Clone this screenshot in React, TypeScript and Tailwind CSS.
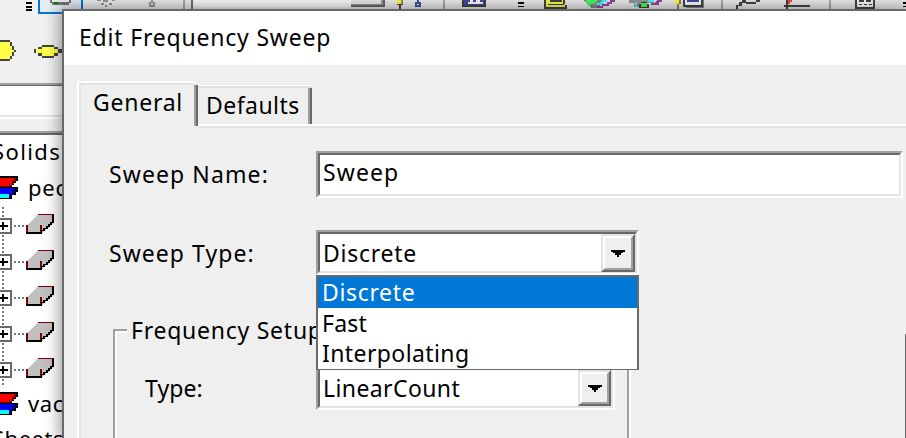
import type { ReactNode } from "react";

const TEXT = "block whitespace-pre font-['Noto_Sans','Open_Sans',sans-serif] leading-[30px]";

function Text({ children, className = "", size = "text-[23px] translate-y-px" }: { children: ReactNode; className?: string; size?: string }) {
  return <span className={`${TEXT} ${size} ${className}`}>{children}</span>;
}

function ToolbarIcons() {
  return (
    <svg width="906" height="10" shapeRendering="crispEdges" className="block shrink-0">
      <path d="M26 2h6v2h-6zM26 6h6v2h-6zM26 9h6v1h-6z" fill="#000" />
      <rect x="38" y="0" width="45" height="10" fill="#e5eef7" />
      <path d="M38 0h2v10h-2zM81 0h2v10h-2z" fill="#0078d7" />
      <path d="M50 0h21v3h-2v2h-17v-2h-2z" fill="#777" />
      <path d="M52 0h17v2h-17z" fill="#eee" />
      <path d="M54 2h4v2h-4z" fill="#008000" />
      <path d="M97 0h4v1h-4zM103 0h5v2h-5zM101 3h3v2h-3zM109 3h3v2h-3zM112 0h3v1h-3zM105 5h2v2h-2zM151 0h2v2h2v5h-6v-5h2z" fill="#999" />
      <path d="M151 3h2v2h-2z" fill="#eee" />
      <path d="M183 0h2v9h-2z" fill="#aaa" />
      <path d="M191 0h2v9h-2z" fill="#777" />
      <path d="M194 0h157v7h-157z" fill="#fff" />
      <path d="M351 0h34v7h-34z" fill="#696969" />
      <path d="M351 0h32v5h-32z" fill="#a0a0a0" />
      <path d="M351 0h30v4h-30z" fill="#ececec" />
      <path d="M397 0h6v4h-6z" fill="#ffff48" />
      <path d="M401 0h2v4h-2z" fill="#999933" />
      <path d="M397 4h6v1h-2v4h-2v-4h-2z" fill="#444" />
      <path d="M417 0h2v2h2v5h-6v-5h2z" fill="#4550a5" />
      <path d="M417 4h2v1h-2z" fill="#fff" />
      <path d="M443 0h2v9h-2zM721 0h2v9h-2zM829 0h2v9h-2z" fill="#aaa" />
      <path d="M462 0h24v7h-24z" fill="#444" />
      <path d="M464 0h20v5h-20z" fill="#4848a4" />
      <path d="M470 0h3v2h3v-2h4v2h3v2h-15v-2h2z" fill="#fff" />
      <path d="M518 2h6v2h-6zM518 6h6v1h-6zM518 9h6v1h-6z" fill="#000" />
      <path d="M544 0h21v5h2v4h-23z" fill="#444" />
      <path d="M546 0h17v4h2v3h-19z" fill="#ffff48" />
      <path d="M550 0h12v2h-12zM548 4h16v1h-16z" fill="#444" />
      <path d="M583 0h24l-10 8h-6z" fill="#888" />
      <path d="M586 0h11v2h-2v2h-4v2h-3v-3h-2z" fill="#48ff60" />
      <path d="M602 0h5v2h-3v3h-8v-2h4z" fill="#48f5ff" />
      <path d="M610 0h5v2h-3v2h-3v2h-6v2h-6v-2h5v-2h5v-2h3z" fill="#9b459d" />
      <path d="M629 0h25v3h-10v4h-10v-4h-5z" fill="#999" />
      <path d="M641 2h6v2h2v4h-10v-4h2z" fill="#444" />
      <path d="M641 3h6v4h-6z" fill="#48ff60" />
      <path d="M635 2h2v5h-2zM648 0h6v2h-6z" fill="#48f5ff" />
      <path d="M657 0h5v2h-3v3h-8v-2h4z" fill="#9b459d" />
      <path d="M675 0h6v4h-6z" fill="#ffff48" />
      <path d="M679 0h2v4h-2zM677 4h2v5h-2z" fill="#8c8c40" />
      <path d="M686 0h18v8h-18z" fill="#888" />
      <path d="M683 0h20v7h-20z" fill="#444" />
      <path d="M685 0h16v5h-16z" fill="#fff" />
      <path d="M687 0h12v2h-12z" fill="#4848a4" />
      <path d="M742 0h18v2h-4v2h-10v-1h-4v3h-4v3h-2v-4h3v-3h3z" fill="#444" />
      <path d="M746 0h10v2h-10z" fill="#eee" />
      <path d="M786 0h2v5h22v2h-22v2h-2v-2h-2v-2h2z" fill="#444" />
      <path d="M788 0h4v2h-2v2h-2z" fill="#ff4848" />
      <path d="M855 0h20v9h-20z" fill="#444" />
      <path d="M857 0h16v7h-16z" fill="#fff" />
      <path d="M859 0h5v2h-5zM866 0h5v2h-5zM859 4h3v1h-3zM864 4h3v1h-3zM869 4h3v1h-3z" fill="#444" />
      <path d="M903 2h3v2h-3zM903 6h3v1h-3zM903 9h3v1h-3z" fill="#000" />
    </svg>
  );
}

function ShapeTools() {
  return (
    <svg width="62" height="73" shapeRendering="crispEdges" className="block shrink-0">
      <path d="M26 0h6v1h-6z" fill="#000" />
      <path d="M38 0h24v4h-24z" fill="#0078d7" />
      <path d="M40 0h22v2h-22z" fill="#e5eef7" />
      <path d="M0 30h10v2h2v4h2v4h2v2h-2v4h-2v3h-2v2h-10z" fill="#444" />
      <path d="M0 32h10v4h2v4h2v2h-2v4h-2v3h-10z" fill="#ffff48" />
      <path d="M42 35h12v2h4v2h4v4h-4v3h-4v2h-12v-2h-4v-3h-4v-4h4v-2h4z" fill="#444" />
      <path d="M42 37h12v2h4v4h-4v3h-12v-3h-6v-4h6z" fill="#ffff48" />
    </svg>
  );
}

function Stack() {
  return (
    <svg width="18" height="24" shapeRendering="crispEdges" className="block shrink-0">
      <path d="M0 0h18v5h-2v2h-2v2h-2v2h6v5h-2v3h-4v4h-12z" fill="#000" />
      <path d="M0 2h16v2h-2v2h-2v4h-12z" fill="#f00" />
      <path d="M16 2v4h-2v2h-3v3h-11v-1h9v-2h3v-4h2v-2z" fill="#800000" />
      <path d="M0 12h14v2h-2v3h-2v4h-10z" fill="#00f" />
      <path d="M12 14h4v2h-2v3h-4v-2h2z" fill="#000080" />
      <path d="M0 18h9v4h-9z" fill="#0ff" />
    </svg>
  );
}

function SolidNode() {
  return (
    <div className="h-9 shrink-0">
      <svg width="62" height="36" shapeRendering="crispEdges" className="block">
        <path d="M3 0v36" stroke="#777" strokeWidth="2" strokeDasharray="2 2" />
        <path d="M14 19h12" stroke="#777" strokeWidth="2" strokeDasharray="2 2" />
        <path d="M0 11h12v16h-12z" fill="#696969" />
        <path d="M0 13h10v12h-10z" fill="#fff" />
        <path d="M0 18h8v2h-8zM2 15h2v8h-2z" fill="#000" />
        <path d="M26 19l12-12h16v9l-12 10h-16z" fill="#c0c0c0" />
        <path d="M38 7h16v1h-16zM26 18h2v7h-2zM40 18h2v7h-2z" fill="#800000" />
        <path d="M52 8h2v8h-2v2h-2v2h-2v2h-3v2h-3v3h-16v-2h15v-2h2v-2h3v-2h2v-2h2v-2h2z" fill="#000" />
      </svg>
    </div>
  );
}

function ArrowButton({ className }: { className: string }) {
  return (
    <div className={`border-2 border-t-[#e3e3e3] border-l-[#e3e3e3] border-r-[#696969] border-b-[#696969] ${className}`}>
      <div className="flex h-full items-center justify-center border-2 border-t-white border-l-white border-r-[#a0a0a0] border-b-[#a0a0a0] bg-[#efefef]">
        <svg width="14" height="7" shapeRendering="crispEdges">
          <path d="M0 0h14v2h-2v1h-2v2h-2v2h-2v-2h-2v-2h-2v-1h-2z" fill="#000" />
        </svg>
      </div>
    </div>
  );
}

function Sunken({ children, className }: { children: ReactNode; className: string }) {
  return (
    <div className={`border-2 border-t-[#a0a0a0] border-l-[#a0a0a0] border-r-white border-b-white ${className}`}>
      <div className="flex h-full justify-between border-2 border-t-[#696969] border-l-[#696969] border-r-[#e3e3e3] border-b-[#e3e3e3] bg-white pl-[3px]">
        {children}
      </div>
    </div>
  );
}

function MainWindow() {
  return (
    <div className="flex h-[438px] flex-col overflow-hidden bg-[#f0f0f0]">
      <ToolbarIcons />
      <ShapeTools />
      <div className="flex w-[62px] flex-1 flex-col overflow-hidden">
        <div className="h-[36px] shrink-0 border-t-2 border-b-2 border-t-[#a0a0a0] border-b-white bg-white">
          <div className="h-px bg-[#696969]" />
          <div className="mt-[29px] h-0.5 bg-[#e3e3e3]" />
        </div>
        <div className="mt-3 flex h-[307px] shrink-0 flex-col overflow-hidden border-t-2 border-[#a0a0a0]">
          <div className="flex flex-1 flex-col border-t-2 border-[#696969] bg-white pt-px">
            <Text size="text-[22px]" className="-ml-[8px] tracking-[1.4px]">Solids</Text>
            <div className="mt-[5px] flex h-[36px] shrink-0">
              <div className="pt-[5px]"><Stack /></div>
              <Text size="text-[22px]" className="mt-px ml-[10px] tracking-[0.8px]">pec</Text>
            </div>
            <SolidNode />
            <SolidNode />
            <SolidNode />
            <SolidNode />
            <SolidNode />
            <div className="flex h-[36px] shrink-0">
              <div className="pt-[5px]"><Stack /></div>
              <Text size="text-[22px]" className="mt-px ml-[10px] tracking-[0.6px]">vac</Text>
            </div>
            <Text size="text-[22px]" className="-ml-[8px] tracking-[0.5px]">Sheets</Text>
          </div>
        </div>
      </div>
    </div>
  );
}

function Tabs() {
  return (
    <div className="flex h-[47px] shrink-0">
      <div className="w-[117px] border-t-2 border-l-2 border-white">
        <div className="flex h-[45px] border-t-2 border-l-2 border-[#e3e3e3]">
          <div className="h-[41px] w-[117px] shrink-0 border-r-2 border-[#696969]">
            <div className="h-full border-r-2 border-[#a0a0a0] pt-[1px] pl-[12px]">
              <Text className="tracking-[0.75px]">General</Text>
            </div>
          </div>
        </div>
      </div>
      <div className="ml-[4px] flex flex-1 flex-col">
        <div className="mt-[4px] h-[39px] w-[114px] border-t border-white">
          <div className="h-[38px] border-t-2 border-[#e3e3e3]">
            <div className="h-9 border-r-2 border-[#696969]">
              <div className="h-full border-r-2 border-[#a0a0a0] pt-px pl-[8px]">
                <Text className="tracking-[0.45px]">Defaults</Text>
              </div>
            </div>
          </div>
        </div>
        <div className="h-0.5 shrink-0 bg-white" />
        <div className="h-0.5 shrink-0 bg-[#e3e3e3]" />
      </div>
    </div>
  );
}

function FrequencySetup() {
  return (
    <div className="ml-[32px] flex h-[130px] w-[518px] shrink-0">
      <div className="mt-[15px] w-[14px] shrink-0 border-t-2 border-l-2 border-[#a0a0a0]">
        <div className="h-full border-t-2 border-l-2 border-white" />
      </div>
      <div className="flex flex-1 flex-col">
        <Text className="ml-[4px] w-[190px] tracking-[0.75px]">Frequency Setup</Text>
        <div className="mt-[22px] flex">
          <Text className="ml-[18px] w-[171px] pt-[6px] tracking-[0.1px]">Type:</Text>
          <Sunken className="h-[44px] w-[299px]">
            <Text className="pt-[2px] tracking-[0.4px]">LinearCount</Text>
            <ArrowButton className="h-[36px] w-[33px]" />
          </Sunken>
        </div>
      </div>
      <div className="mt-[15px] w-[4px] border-r-2 border-white">
        <div className="h-full border-r-2 border-[#a0a0a0]" />
      </div>
    </div>
  );
}

const OPTIONS = [
  { name: "Discrete", style: "h-[31px] bg-[#0078d7] text-white tracking-[0.65px]" },
  { name: "Fast", style: "h-[30px] tracking-[0.2px]" },
  { name: "Interpolating", style: "h-[31px] tracking-[0.4px]" },
];

function TypeList() {
  return (
    <div className="absolute top-[45px] left-0 z-10 h-[95px] w-[323px] border-2 border-b border-[#696969] bg-white">
      {OPTIONS.map((o) => (
        <div key={o.name} className={`pl-[4px] ${o.style}`}>
          <Text size="text-[23px]">{o.name}</Text>
        </div>
      ))}
    </div>
  );
}

function SweepDialog() {
  return (
    <div className="absolute top-[9px] left-[62px] flex h-[429px] w-[844px] flex-col overflow-hidden border-t-2 border-l-2 border-[#696969] bg-[#efefef] shadow-[0_0_14px_3px_rgba(0,0,0,0.38)]">
      <div className="h-[54px] shrink-0 bg-white pt-[10px] pl-[15px]">
        <Text className="tracking-[0.8px]">Edit Frequency Sweep</Text>
      </div>
      <div className="mt-4 ml-[13px] flex flex-1 flex-col">
        <Tabs />
        <div className="flex flex-1 border-l-2 border-white">
          <div className="flex flex-1 flex-col border-l-2 border-[#e3e3e3] pt-[23px]">
            <div className="flex h-[79px] shrink-0">
              <Text className="ml-[28px] w-[207px] pt-[7px] tracking-[1.1px]">Sweep Name:</Text>
              <Sunken className="h-[47px] w-[587px]">
                <Text className="pt-[1px] tracking-[1.1px]">Sweep</Text>
              </Sunken>
            </div>
            <div className="flex h-[84px] shrink-0">
              <Text className="ml-[28px] w-[207px] pt-[7px] tracking-[1.05px]">Sweep Type:</Text>
              <div className="relative">
                <Sunken className="h-[45px] w-[323px]">
                  <Text className="pt-[3px] tracking-[0.75px]">Discrete</Text>
                  <ArrowButton className="h-[38px] w-[34px]" />
                </Sunken>
                <TypeList />
              </div>
            </div>
            <FrequencySetup />
          </div>
        </div>
      </div>
      <div className="absolute right-0 bottom-0 h-[104px] w-px bg-[#696969]" />
    </div>
  );
}

export default function App() {
  return (
    <div className="relative h-[438px] w-[906px] overflow-hidden text-black">
      <MainWindow />
      <SweepDialog />
    </div>
  );
}
